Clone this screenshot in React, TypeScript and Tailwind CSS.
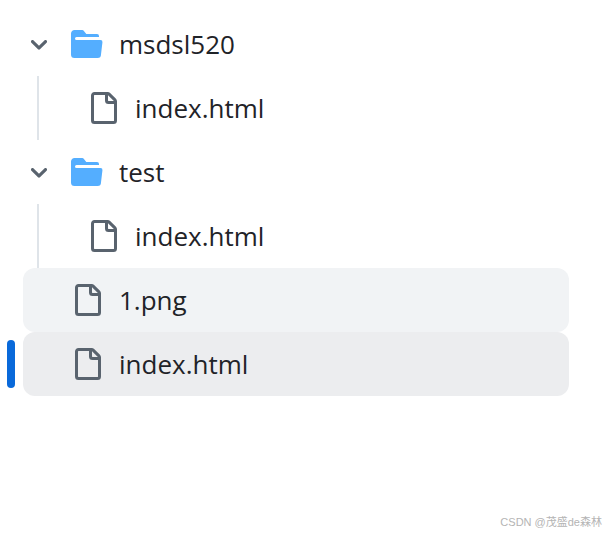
import React from "react";

type Kind = "folder" | "file";
type State = "idle" | "hovered" | "selected";

interface Entry {
  id: string;
  name: string;
  kind: Kind;
  nested?: boolean;
  state?: State;
}

const entries: Entry[] = [
  { id: "msdsl520", name: "msdsl520", kind: "folder" },
  { id: "msdsl520/index", name: "index.html", kind: "file", nested: true },
  { id: "test", name: "test", kind: "folder" },
  { id: "test/index", name: "index.html", kind: "file", nested: true },
  { id: "png", name: "1.png", kind: "file", state: "hovered" },
  { id: "index", name: "index.html", kind: "file", state: "selected" },
];

const backgrounds: Record<State, string> = {
  idle: "bg-transparent",
  hovered: "bg-[#f1f3f5]",
  selected: "bg-[#ecedef]",
};

function ChevronDown() {
  return (
    <svg viewBox="0 0 12 12" className="size-6 fill-[#59636e]" aria-hidden="true">
      <path d="M6 8.825c-.2 0-.4-.1-.5-.2l-3.3-3.3c-.3-.3-.3-.8 0-1.1.3-.3.8-.3 1.1 0l2.7 2.7 2.7-2.7c.3-.3.8-.3 1.1 0 .3.3.3.8 0 1.1l-3.2 3.2c-.2.2-.4.3-.6.3Z" />
    </svg>
  );
}

function FolderOpen() {
  return (
    <svg viewBox="0 0 16 16" className="size-8 shrink-0 fill-[#54aeff]" aria-hidden="true">
      <path d="M.513 1.513A1.75 1.75 0 0 1 1.75 1h3.5c.55 0 1.07.26 1.4.7l.9 1.2a.25.25 0 0 0 .2.1H13a1 1 0 0 1 1 1v.5H2.75a.75.75 0 0 0 0 1.5h11.978a1 1 0 0 1 .994 1.117L15 13.25A1.75 1.75 0 0 1 13.25 15H1.75A1.75 1.75 0 0 1 0 13.25V2.75c0-.464.184-.91.513-1.237Z" />
    </svg>
  );
}

function FileIcon() {
  return (
    <svg viewBox="0 0 16 16" className="size-8 shrink-0 fill-[#59636e]" aria-hidden="true">
      <path d="M2 1.75C2 .784 2.784 0 3.75 0h6.586c.464 0 .909.184 1.237.513l2.914 2.914c.329.328.513.773.513 1.237v9.586A1.75 1.75 0 0 1 13.25 16h-9.5A1.75 1.75 0 0 1 2 14.25Zm1.75-.25a.25.25 0 0 0-.25.25v12.5c0 .138.112.25.25.25h9.5a.25.25 0 0 0 .25-.25V6h-2.75A1.75 1.75 0 0 1 9 4.25V1.5Zm6.75.062V4.25c0 .138.112.25.25.25h2.688l-.011-.013-2.914-2.914-.013-.011Z" />
    </svg>
  );
}

function Row({ entry }: { entry: Entry }) {
  const state = entry.state ?? "idle";
  return (
    <li className="flex items-center gap-2">
      <span className={`h-12 w-2 shrink-0 rounded-full ${state === "selected" ? "bg-[#0969da]" : ""}`} />
      <button
        type="button"
        aria-expanded={entry.kind === "folder" ? true : undefined}
        aria-current={state === "selected" ? "page" : undefined}
        className={`flex h-16 min-w-0 flex-1 items-center rounded-xl text-left ${backgrounds[state]}`}
      >
        <span className={`flex h-full shrink-0 items-center ${entry.nested ? "w-16 pl-[14px]" : "w-12 pl-1"}`}>
          {entry.kind === "folder" && <ChevronDown />}
          {entry.nested && <span className="h-full w-[2px] bg-[#dfe4e9]" />}
        </span>
        <span className="flex min-w-0 items-center gap-4">
          {entry.kind === "folder" ? <FolderOpen /> : <FileIcon />}
          <span className="truncate text-[26px] leading-10 text-[#1f2328]">{entry.name}</span>
        </span>
      </button>
    </li>
  );
}

export default function App() {
  return (
    <div className="flex min-h-screen flex-col bg-white font-['Open_Sans','Noto_Sans',sans-serif]">
      <nav aria-label="Files" className="pt-3 pr-10 pl-[7px]">
        <ul>
          {entries.map((entry) => (
            <Row key={entry.id} entry={entry} />
          ))}
        </ul>
      </nav>
      <footer className="mt-auto pr-[7px] pb-1 text-right font-['Liberation_Sans','Noto_Sans_CJK_SC',sans-serif] text-[11px] leading-4 text-[#b4b4b4]">
        CSDN @茂盛de森林
      </footer>
    </div>
  );
}
